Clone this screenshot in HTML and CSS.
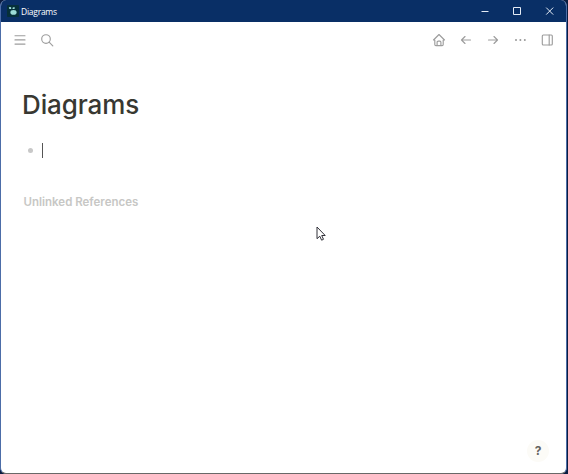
FILE: index.html
```html
<!DOCTYPE html>
<html lang="en">
<head>
<meta charset="utf-8">
<title>Diagrams</title>
<link rel="stylesheet" href="styles.css">
</head>
<body>
<div class="window">
  <header class="titlebar">
    <svg class="app-icon" viewBox="0 0 12 12"><rect width="12" height="12" rx="1" fill="#06303a"/><g fill="#9bdcd7"><ellipse cx="6.5" cy="7.4" rx="3.1" ry="2.3"/><ellipse cx="3.1" cy="3" rx="1.3" ry="1" transform="rotate(25 3.1 3)"/><ellipse cx="6.7" cy="3.1" rx="1.3" ry=".9" transform="rotate(-15 6.7 3.1)"/></g></svg>
    <span class="window-title">Diagrams</span>
    <div class="window-controls">
      <svg viewBox="0 0 10 10"><path d="M1.5 5.5h7"/></svg>
      <svg viewBox="0 0 10 10"><path d="M1.5 1.5h7v7h-7z"/></svg>
      <svg viewBox="0 0 10 10"><path d="M2.2 1.6l7 7M9.2 1.6l-7 7"/></svg>
    </div>
  </header>
  <nav class="toolbar">
    <svg class="icon" viewBox="0 0 14 14"><path d="M2 2.7h10M2 6.9h10M2 11.1h10"/></svg>
    <svg class="icon" viewBox="0 0 14 14"><circle cx="6" cy="6" r="4.3"/><path d="M9.1 9.1l3.7 3.7"/></svg>
    <span class="spacer"></span>
    <svg class="icon" viewBox="0 0 14 14"><path d="M2.8 7H1.5L7 1.5 12.5 7h-1.3M2.8 7v4.5a1.1 1.1 0 0 0 1.1 1.1h6.2a1.1 1.1 0 0 0 1.1-1.1V7M5.1 12.6V9.2a1.1 1.1 0 0 1 1.1-1.1h1.6a1.1 1.1 0 0 1 1.1 1.1v3.4"/></svg>
    <svg class="icon" viewBox="0 0 14 14"><path d="M11.5 7h-9M6 3.5L2.5 7 6 10.5"/></svg>
    <svg class="icon" viewBox="0 0 14 14"><path d="M2.5 7h9M8 3.5L11.5 7 8 10.5"/></svg>
    <svg class="icon dots" viewBox="0 0 14 14"><circle cx="3" cy="7" r="1"/><circle cx="7.4" cy="7" r="1"/><circle cx="11.8" cy="7" r="1"/></svg>
    <svg class="icon" viewBox="0 0 14 14"><rect x="2.3" y="2" width="10" height="10" rx="1"/><path d="M9.2 2v10"/></svg>
  </nav>
  <main class="page">
    <h1>Diagrams</h1>
    <div class="block"><span class="bullet"></span><span class="caret"></span></div>
    <h2>Unlinked References</h2>
  </main>
  <button class="help" aria-label="Help">?</button>
  <svg class="pointer" viewBox="0 0 10 16"><path d="M1 1v11.7l2.8-2.5 1.8 4 1.9-.9-1.8-3.8h3.5z"/></svg>
</div>
</body>
</html>
```
FILE: styles.css
```css
* { box-sizing: border-box; }

body {
  margin: 0;
  height: 474px;
  overflow: hidden;
  background: #0a1c40;
  font-family: Inter, "Liberation Sans", sans-serif;
}

.window {
  position: relative;
  width: 567px;
  height: 474px;
  overflow: hidden;
  background: #fff;
  border: 1px solid #4c6da8;
  border-top: 0;
  border-bottom-color: #686868;
  border-radius: 6px;
}

.titlebar {
  display: flex;
  align-items: center;
  height: 22px;
  padding-left: 6px;
  background: #092f66;
  color: #fff;
}

.app-icon { width: 12px; height: 12px; }

.window-title {
  margin: 1px 0 0 2px;
  font: 8.5px/12px "Open Sans", sans-serif;
  letter-spacing: -0.25px;
}

.window-controls {
  display: flex;
  gap: 22px;
  margin-left: auto;
  padding-right: 12px;
}

.window-controls svg {
  width: 10px;
  height: 10px;
  fill: none;
  stroke: #e4ebf5;
  stroke-width: 1;
}

.toolbar {
  display: flex;
  align-items: center;
  gap: 13px;
  height: 36px;
  padding: 0 12px;
}

.spacer { flex: 1; }

.icon {
  width: 14px;
  height: 14px;
  fill: none;
  stroke: #9d9d9d;
  stroke-width: 1.15;
  stroke-linecap: round;
  stroke-linejoin: round;
}

.dots { fill: #979797; stroke: none; }

.page { padding: 30px 21px 0; }

h1 {
  margin: 0;
  font-size: 26px;
  line-height: 34px;
  font-weight: 550;
  letter-spacing: -0.12px;
  color: #383832;
}

.block {
  display: flex;
  align-items: center;
  height: 16px;
  margin-top: 20px;
  padding-left: 6px;
}

.bullet {
  width: 5px;
  height: 5px;
  border-radius: 50%;
  background: #c8c8c8;
}

.caret {
  width: 1px;
  height: 15px;
  margin-left: 9px;
  background: #555;
}

h2 {
  margin: 36px 0 0 1.5px;
  font-size: 11.5px;
  line-height: 16px;
  font-weight: 600;
  color: #c7c7c5;
}

.help {
  position: absolute;
  right: 17px;
  bottom: 11px;
  width: 22px;
  height: 22px;
  padding: 0;
  border: 0;
  border-radius: 50%;
  background: #fcfbf7;
  color: #65635f;
  font: 700 12px/22px Inter, sans-serif;
}

.pointer {
  position: absolute;
  left: 315px;
  top: 226px;
  width: 10px;
  height: 16px;
  fill: #fff;
  stroke: #303038;
  stroke-width: 1;
}
```
